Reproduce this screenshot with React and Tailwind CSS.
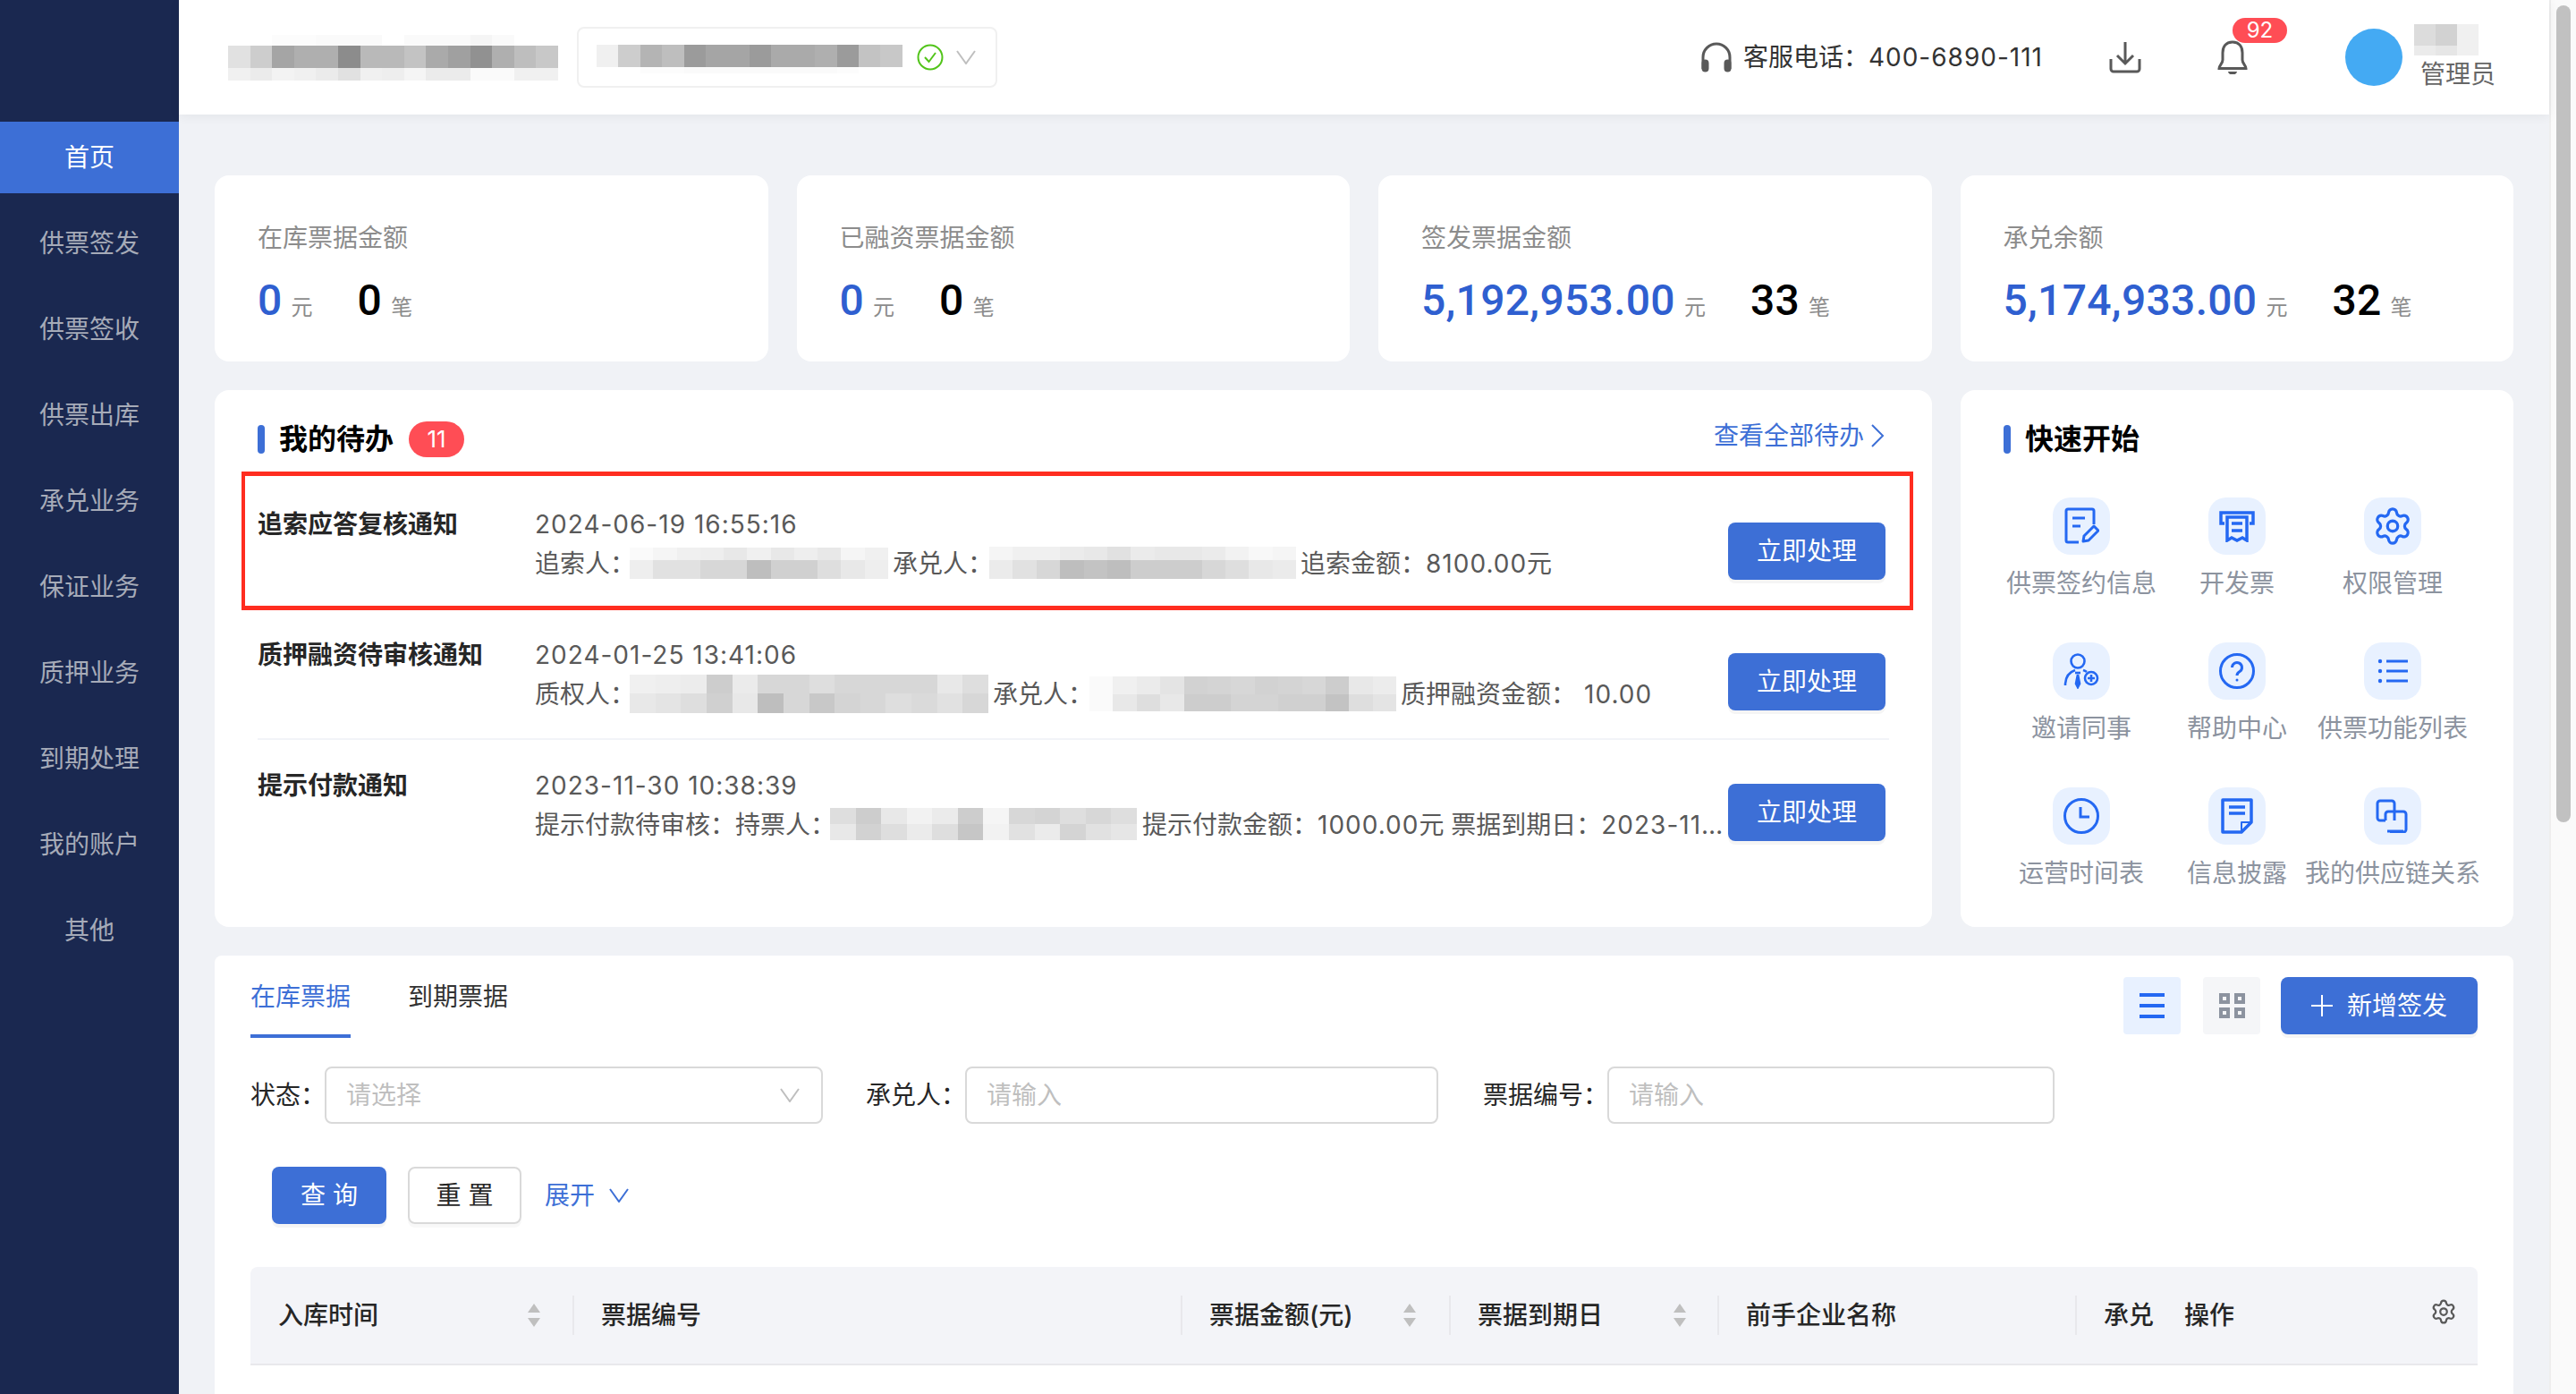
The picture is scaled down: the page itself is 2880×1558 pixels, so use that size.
import React from 'react';
import { Settings } from 'lucide-react';

const menus = ['供票签发', '供票签收', '供票出库', '承兑业务', '保证业务', '质押业务', '到期处理', '我的账户', '其他'];

// blurred blocks in the screenshot: each row is [flex weight, gray values]
const Mosaic = ({ className = '', rows }) => (
  <span className={`inline-flex flex-col align-middle shrink-0 ${className}`}>
    {rows.map(([weight, cells], i) => (
      <span key={i} className="flex" style={{ flex: weight }}>
        {cells.map((v, j) => (
          <span key={j} className="flex-1" style={{ backgroundColor: `rgb(${v},${v},${v})` }} />
        ))}
      </span>
    ))}
  </span>
);

const Num = ({ children }) => <span className="tracking-[1px]">{children}</span>;

const Chevron = ({ className = '' }) => (
  <svg className={className} width="22" height="16" viewBox="0 0 22 16" fill="none" stroke="currentColor" strokeWidth="2">
    <path d="M1 1l10 14L21 1" />
  </svg>
);

const Sort = () => (
  <svg width="16" height="26" viewBox="0 0 16 26" fill="#bfbfbf">
    <path d="M8 0l7 10H1zM8 26L1 16h14z" />
  </svg>
);

const tileIcons = [
  <svg width="40" height="42" viewBox="0 0 40 42" fill="none" stroke="#2468f2" strokeWidth="3" strokeLinejoin="round"><path d="M17 39H5a2 2 0 0 1-2-2V4a2 2 0 0 1 2-2h27a2 2 0 0 1 2 2v15" /><path d="M10 12h14M10 21h9" /><path d="M22 38l1-6 11-11 5 5-11 11z" /></svg>,
  <svg width="40" height="36" viewBox="0 0 40 36" fill="none" stroke="#2468f2" strokeWidth="3.5"><path d="M6 15H2V3h36v12h-4" /><path d="M9 8h22v26l-5-3-6 3-6-3-5 3z" /><path d="M14 15h12M14 23h12" /></svg>,
  <Settings size={46} color="#2468f2" strokeWidth={1.7} />,
  <svg width="40" height="40" viewBox="0 0 40 40" fill="none" stroke="#2468f2" strokeWidth="2.6"><circle cx="16" cy="9" r="7.5" /><path d="M2 36c0-10 5-15 11-17M22 19c1.500.5 3 1.200 4 2" /><path d="M13 22h6" /><path d="M16 24l-2 10 2 4 2-4z" fill="#2468f2" /><circle cx="31" cy="28" r="7" /><path d="M31 24v8M27 28h8" /></svg>,
  <svg width="42" height="42" viewBox="0 0 42 42" fill="none" stroke="#2468f2" strokeWidth="3"><circle cx="21" cy="21" r="18.500" /><path d="M15.500 17a5.500 5.500 0 1 1 8.500 4.600c-2 1.300-3 2.400-3 4.400" /><circle cx="21" cy="31" r="1.500" fill="#2468f2" stroke="none" /></svg>,
  <svg width="34" height="28" viewBox="0 0 34 28" fill="none" stroke="#2468f2" strokeWidth="3"><path d="M10 3h24M10 14h24M10 25h24" /><circle cx="3" cy="3" r="2.200" fill="#2468f2" stroke="none" /><circle cx="3" cy="14" r="2.200" fill="#2468f2" stroke="none" /><circle cx="3" cy="25" r="2.200" fill="#2468f2" stroke="none" /></svg>,
  <svg width="42" height="42" viewBox="0 0 42 42" fill="none" stroke="#2468f2" strokeWidth="3"><circle cx="21" cy="21" r="18.500" /><path d="M20 11v11h10" /></svg>,
  <svg width="36" height="40" viewBox="0 0 36 40" fill="none" stroke="#2468f2" strokeWidth="3.500" strokeLinejoin="round"><path d="M2 2h32v25L23 38H2z" /><path d="M23 38V27h11" strokeWidth="2" /><path d="M9 10h18M9 17h18" /></svg>,
  <svg width="38" height="38" viewBox="0 0 38 38" fill="none" stroke="#2468f2" strokeWidth="3"><path d="M11 24H5a3 3 0 0 1-3-3V5a3 3 0 0 1 3-3h13a3 3 0 0 1 3 3v19" /><path d="M11 24v-7a3 3 0 0 1 3-3h17a3 3 0 0 1 3 3v17a3 3 0 0 1-3 3H16" /><path d="M13 36h18" /></svg>,
];

const tiles = ['供票签约信息', '开发票', '权限管理', '邀请同事', '帮助中心', '供票功能列表', '运营时间表', '信息披露', '我的供应链关系'];

const stats = [
  { label: '在库票据金额', amount: '0', count: '0' },
  { label: '已融资票据金额', amount: '0', count: '0' },
  { label: '签发票据金额', amount: '5,192,953.00', count: '33' },
  { label: '承兑余额', amount: '5,174,933.00', count: '32' },
];

const blur = {
  a: [[14, [250, 245, 240, 238, 232, 240, 232, 238, 232, 245, 240]], [21, [238, 225, 225, 215, 215, 190, 208, 208, 222, 232, 238]]],
  b: [[14, [245, 240, 240, 235, 232, 225, 235, 232, 232, 235, 242, 248, 245]], [21, [235, 225, 215, 190, 195, 190, 205, 205, 205, 215, 222, 232, 235]]],
  c: [[22, [240, 238, 236, 205, 235, 215, 215, 222, 215, 215, 215, 215, 232, 222]], [22, [232, 228, 222, 208, 232, 190, 215, 200, 212, 215, 222, 218, 225, 215]]],
  d: [[20, [250, 240, 235, 228, 210, 212, 215, 210, 212, 215, 205, 232, 236]], [19, [250, 232, 222, 232, 205, 205, 212, 212, 208, 208, 195, 222, 228]]],
  e: [[14, [222, 205, 232, 242, 235, 205, 245, 215, 212, 222, 215, 222]], [14, [232, 210, 222, 235, 222, 198, 242, 225, 235, 212, 225, 230]]],
};

const rowsData = [
  {
    title: '追索应答复核通知',
    time: '2024-06-19 16:55:16',
    line: (
      <>
        追索人：<Mosaic className="w-[289px] h-[35px] -ml-[6px] -mt-[6px]" rows={blur.a} />
        <span className="ml-[5px]">承兑人：</span><Mosaic className="w-[343px] h-[36px] -ml-[4px] -mt-[6px]" rows={blur.b} />
        <span className="ml-[5px]">追索金额：<Num>8100.00</Num>元</span>
      </>
    ),
  },
  {
    title: '质押融资待审核通知',
    time: '2024-01-25 13:41:06',
    line: (
      <>
        质权人：<Mosaic className="w-[401px] h-[44px] -ml-[6px] -mt-[6px]" rows={blur.c} />
        <span className="ml-[5px]">承兑人：</span><Mosaic className="w-[343px] h-[39px] -ml-[4px] -mt-[6px]" rows={blur.d} />
        <span className="ml-[5px]">质押融资金额：</span><span className="ml-[9px]"><Num>10.00</Num></span>
      </>
    ),
  },
  {
    title: '提示付款通知',
    time: '2023-11-30 10:38:39',
    line: (
      <>
        提示付款待审核：持票人：<Mosaic className="w-[343px] h-[36px] -ml-[6px] -mt-[6px]" rows={blur.e} />
        <span className="ml-[6px]">提示付款金额：<Num>1000.00</Num>元 票据到期日：<Num>2023-11-30</Num></span>
      </>
    ),
  },
];

const Field = ({ label, className, placeholder, children }) => (
  <>
    <span className="text-[#262626]">{label}</span>
    <div className={`h-16 border-2 border-[#d9d9d9] rounded-lg bg-white flex items-center justify-between pl-[22px] pr-6 text-[#bfbfbf] ${className}`}>
      {placeholder}
      {children}
    </div>
  </>
);

export default function App() {
  return (
    <div className="w-[2880px] h-[1558px] flex overflow-hidden bg-[#f0f2f6] text-[28px] font-['Inter','Noto_Sans_CJK_SC',sans-serif]">
      <aside className="w-[200px] shrink-0 bg-[#1a2850] pt-[136px] text-[#a6abb8] text-center">
        <div className="h-20 mb-4 bg-[#3d6fd6] text-white flex items-center justify-center">首页</div>
        {menus.map((m) => (
          <div key={m} className="h-20 mb-4 flex items-center justify-center">{m}</div>
        ))}
      </aside>

      <div className="flex-1 min-w-0 flex flex-col">
        <header className="h-32 shrink-0 bg-white shadow-[0_2px_12px_rgba(0,0,0,0.06)] flex items-center pl-[55px] pr-[62px] relative">
          <Mosaic className="w-[369px] h-[51px]" rows={[[12, [255, 255, 252, 252, 250, 250, 250, 255, 250, 250, 250, 245, 250, 255, 255]], [25, [225, 205, 165, 175, 175, 140, 185, 185, 195, 170, 160, 145, 175, 190, 200]], [14, [240, 235, 243, 240, 235, 225, 240, 238, 245, 235, 235, 250, 250, 240, 240]]]} />
          <div className="ml-[21px] w-[470px] h-[68px] border-2 border-[#f0f0f0] rounded-lg flex items-center pl-5">
            <Mosaic className="w-[342px] h-[32px] mt-[4px]" rows={[[25, [240, 205, 180, 190, 155, 165, 165, 155, 170, 170, 175, 155, 195, 200]], [7, [255, 255, 252, 252, 250, 250, 250, 250, 250, 250, 250, 252, 255, 255]]]} />
            <svg className="ml-4" width="30" height="30" viewBox="0 0 30 30" fill="none" stroke="#52c41a" strokeWidth="2"><circle cx="15" cy="15" r="13.500" /><path d="M9 15l4.500 5L21 10" /></svg>
            <Chevron className="ml-[14px] text-[#bfbfbf]" />
          </div>

          <div className="ml-auto flex items-center text-[#333]">
            <svg width="34" height="34" viewBox="0 0 34 34" fill="none" stroke="#595959" strokeWidth="3"><path d="M2 30V17a15 15 0 0 1 30 0v13" /><rect x="2" y="21" width="5" height="11" rx="2.500" fill="#595959" /><rect x="27" y="21" width="5" height="11" rx="2.500" fill="#595959" /></svg>
            <span className="ml-[13px]">客服电话：<Num>400-6890-111</Num></span>
          </div>
          <svg className="ml-[74px]" width="36" height="36" viewBox="0 0 36 36" fill="none" stroke="#595959" strokeWidth="3"><path d="M18 1v24M9 16l9 9 9-9" /><path d="M2 20v11a3 3 0 0 0 3 3h26a3 3 0 0 0 3-3V20" /></svg>
          <div className="ml-[84px] relative">
            <svg className="block" width="36" height="38" viewBox="0 0 36 38" fill="none" stroke="#595959" strokeWidth="3"><path d="M18 2C10 2 7 8 7 14v8c0 4-4 6-4 9.500h30C33 28 29 26 29 22v-8C29 8 26 2 18 2z" /><path d="M13 35a5 3.500 0 0 0 10 0z" fill="#595959" stroke="none" /></svg>
            <span className="absolute left-[18px] -top-[25px] w-[61px] h-7 rounded-[14px] bg-[#ff4d55] text-white text-[24px] leading-7 text-center">92</span>
          </div>
          <span className="ml-[108px] w-16 h-16 rounded-full bg-[#44aaf3]" />
          <div className="ml-[13px] flex flex-col w-[89px]">
            <Mosaic className="w-[72px] h-[35px]" rows={[[24, [220, 210, 240]], [11, [235, 230, 240]]]} />
            <span className="ml-[7px] mt-[2px] leading-[38px] text-[#666] whitespace-nowrap">管理员</span>
          </div>
        </header>

        <main className="flex-1 min-h-0 px-10 pt-[68px] flex flex-col gap-8">
          <section className="grid grid-cols-4 gap-8">
            {stats.map((s) => (
              <div key={s.label} className="h-[208px] bg-white rounded-2xl pt-[50px] pl-12">
                <div className="leading-10 text-[#8c8c8c]">{s.label}</div>
                <div className="mt-[22px] flex items-baseline text-[24px] text-[#8c8c8c] font-['Roboto','Noto_Sans_CJK_SC',sans-serif]">
                  <span className="text-[48px] leading-[56px] font-medium tracking-[0.3px] text-[#2f5fd0]">{s.amount}</span>
                  <span className="ml-[10px]">元</span>
                  <span className="text-[48px] leading-[56px] font-medium tracking-[0.3px] text-black ml-[50px]">{s.count}</span>
                  <span className="ml-[10px]">笔</span>
                </div>
              </div>
            ))}
          </section>

          <section className="grid grid-cols-[1920px_1fr] gap-8">
            <div className="h-[600px] bg-white rounded-2xl px-12 pt-[35px]">
              <div className="h-10 flex items-center">
                <span className="w-2 h-8 rounded bg-[#3d6fd6]" />
                <span className="ml-4 text-[32px] font-semibold text-black">我的待办</span>
                <span className="ml-[17px] w-[62px] h-10 rounded-[20px] bg-[#ff4d55] text-white text-[26px] leading-10 text-center">11</span>
                <span className="ml-auto mr-[5px] -mt-2 flex items-center text-[#3d6fd6]">
                  查看全部待办
                  <svg className="ml-2" width="15" height="26" viewBox="0 0 15 26" fill="none" stroke="currentColor" strokeWidth="2"><path d="M1 1l12 12L1 25" /></svg>
                </span>
              </div>
              <div className="mt-6 relative">
                {rowsData.map((r, i) => (
                  <div key={r.title} className={`h-[146px] pt-[29px] flex ${i < 2 ? 'border-b-2 border-[#f2f4f8]' : ''}`}>
                    <div className="w-[310px] shrink-0 leading-11 font-semibold text-[#262626]">{r.title}</div>
                    <div className="w-[1330px] shrink-0 leading-11 text-[#595959]">
                      <div className="tracking-[1px]">{r.time}</div>
                      <div className="truncate">{r.line}</div>
                    </div>
                    <button className="ml-[4px] mt-5 w-[176px] h-16 rounded-lg bg-[#3d6fd6] text-white shadow-[0_4px_0_#f5f5f5]">立即处理</button>
                  </div>
                ))}
                <div className="absolute -left-[18px] -top-2 w-[1869px] h-[155px] border-x-4 border-y-[5px] border-[#ff2d20]" />
              </div>
            </div>

            <div className="h-[600px] bg-white rounded-2xl pl-12 pt-[35px]">
              <div className="h-10 flex items-center">
                <span className="w-2 h-8 rounded bg-[#3d6fd6]" />
                <span className="ml-4 text-[32px] font-semibold text-black">快速开始</span>
              </div>
              <div className="mt-[45px] w-[522px] grid grid-cols-3">
                {tiles.map((t, i) => (
                  <div key={t} className="h-[162px] flex flex-col items-center">
                    <span className="w-16 h-16 rounded-[20px] bg-[#e8f1ff] flex items-center justify-center">{tileIcons[i]}</span>
                    <span className="mt-[12px] leading-10 text-[#8c939f] whitespace-nowrap">{t}</span>
                  </div>
                ))}
              </div>
            </div>
          </section>

          <section className="flex-1 bg-white rounded-t-lg px-10 relative">
            <div className="flex items-start">
              <div className="pt-6 w-[112px] text-center text-[#3d6fd6] leading-11 h-[92px] border-b-4 border-[#3d6fd6] whitespace-nowrap">在库票据</div>
              <div className="pt-6 ml-[64px] leading-11 text-[#333]">到期票据</div>
              <button className="ml-auto mt-6 w-16 h-16 rounded bg-[#e8f1ff] flex flex-col items-center justify-center gap-2">
                <span className="w-7 h-1 bg-[#2468f2]" /><span className="w-7 h-1 bg-[#2468f2]" /><span className="w-7 h-1 bg-[#2468f2]" />
              </button>
              <button className="ml-[25px] mt-6 w-16 h-16 rounded bg-[#f5f6f8] flex items-center justify-center">
                <svg width="29" height="28" viewBox="0 0 29 28" fill="none" stroke="#8c939f" strokeWidth="4"><rect x="2" y="2" width="8" height="8" /><rect x="19" y="2" width="8" height="8" /><rect x="2" y="18" width="8" height="8" /><rect x="19" y="18" width="8" height="8" /></svg>
              </button>
              <button className="ml-[23px] mt-6 w-[220px] h-16 rounded-lg bg-[#3d6fd6] text-white shadow-[0_4px_0_#f5f5f5] flex items-center justify-center">
                <svg width="24" height="24" viewBox="0 0 24 24" fill="none" stroke="currentColor" strokeWidth="2"><path d="M12 0v24M0 12h24" /></svg>
                <span className="ml-4">新增签发</span>
              </button>
            </div>

            <div className="mt-8 flex items-center">
              <Field label="状态：" className="-ml-[1px] w-[557px]" placeholder="请选择"><Chevron /></Field>
              <span className="ml-[48px]" />
              <Field label="承兑人：" className="-ml-[1px] w-[529px]" placeholder="请输入" />
              <span className="ml-[50px]" />
              <Field label="票据编号：" className="-ml-[1px] w-[500px]" placeholder="请输入" />
            </div>

            <div className="mt-[48px] ml-6 flex items-center">
              <button className="w-32 h-16 rounded-lg bg-[#3d6fd6] text-white shadow-[0_4px_0_#f5f5f5]">查 询</button>
              <button className="ml-6 w-[127px] h-16 rounded-lg border-2 border-[#d9d9d9] text-[#262626] shadow-[0_4px_0_#f8f8f8]">重 置</button>
              <span className="ml-[26px] text-[#3d6fd6]">展开</span>
              <Chevron className="ml-4 text-[#3d6fd6]" />
            </div>

            <div className="mt-[48px] h-[110px] bg-[#f3f4f8] border-b-2 border-[#e8e8ec] rounded-t-lg grid grid-cols-[360px_680px_300px_300px_400px_91px_1fr] items-center font-medium text-[#262626]">
              <div className="pl-[31px] pr-[35px] flex items-center justify-between">入库时间<Sort /></div>
              <div className="pl-[30px] border-l-2 border-[#e8e8ec] leading-11">票据编号</div>
              <div className="pl-[30px] pr-[36px] border-l-2 border-[#e8e8ec] leading-11 flex items-center justify-between">票据金额(元)<Sort /></div>
              <div className="pl-[30px] pr-[34px] border-l-2 border-[#e8e8ec] leading-11 flex items-center justify-between">票据到期日<Sort /></div>
              <div className="pl-[30px] border-l-2 border-[#e8e8ec] leading-11">前手企业名称</div>
              <div className="pl-[30px] border-l-2 border-[#e8e8ec] leading-11 whitespace-nowrap">承兑</div>
              <div className="pl-[31px] flex items-center justify-between pr-[23px]">操作<Settings className="-mt-2" size={30} color="#595959" strokeWidth={1.8} /></div>
            </div>
          </section>
        </main>
      </div>

      <div className="w-[30px] shrink-0 bg-[#fafafa] border-l-2 border-[#eeeeee] pt-[6px] pl-[6px]">
        <div className="w-4 h-[913px] rounded-full bg-[#c1c1c1]" />
      </div>
    </div>
  );
}
